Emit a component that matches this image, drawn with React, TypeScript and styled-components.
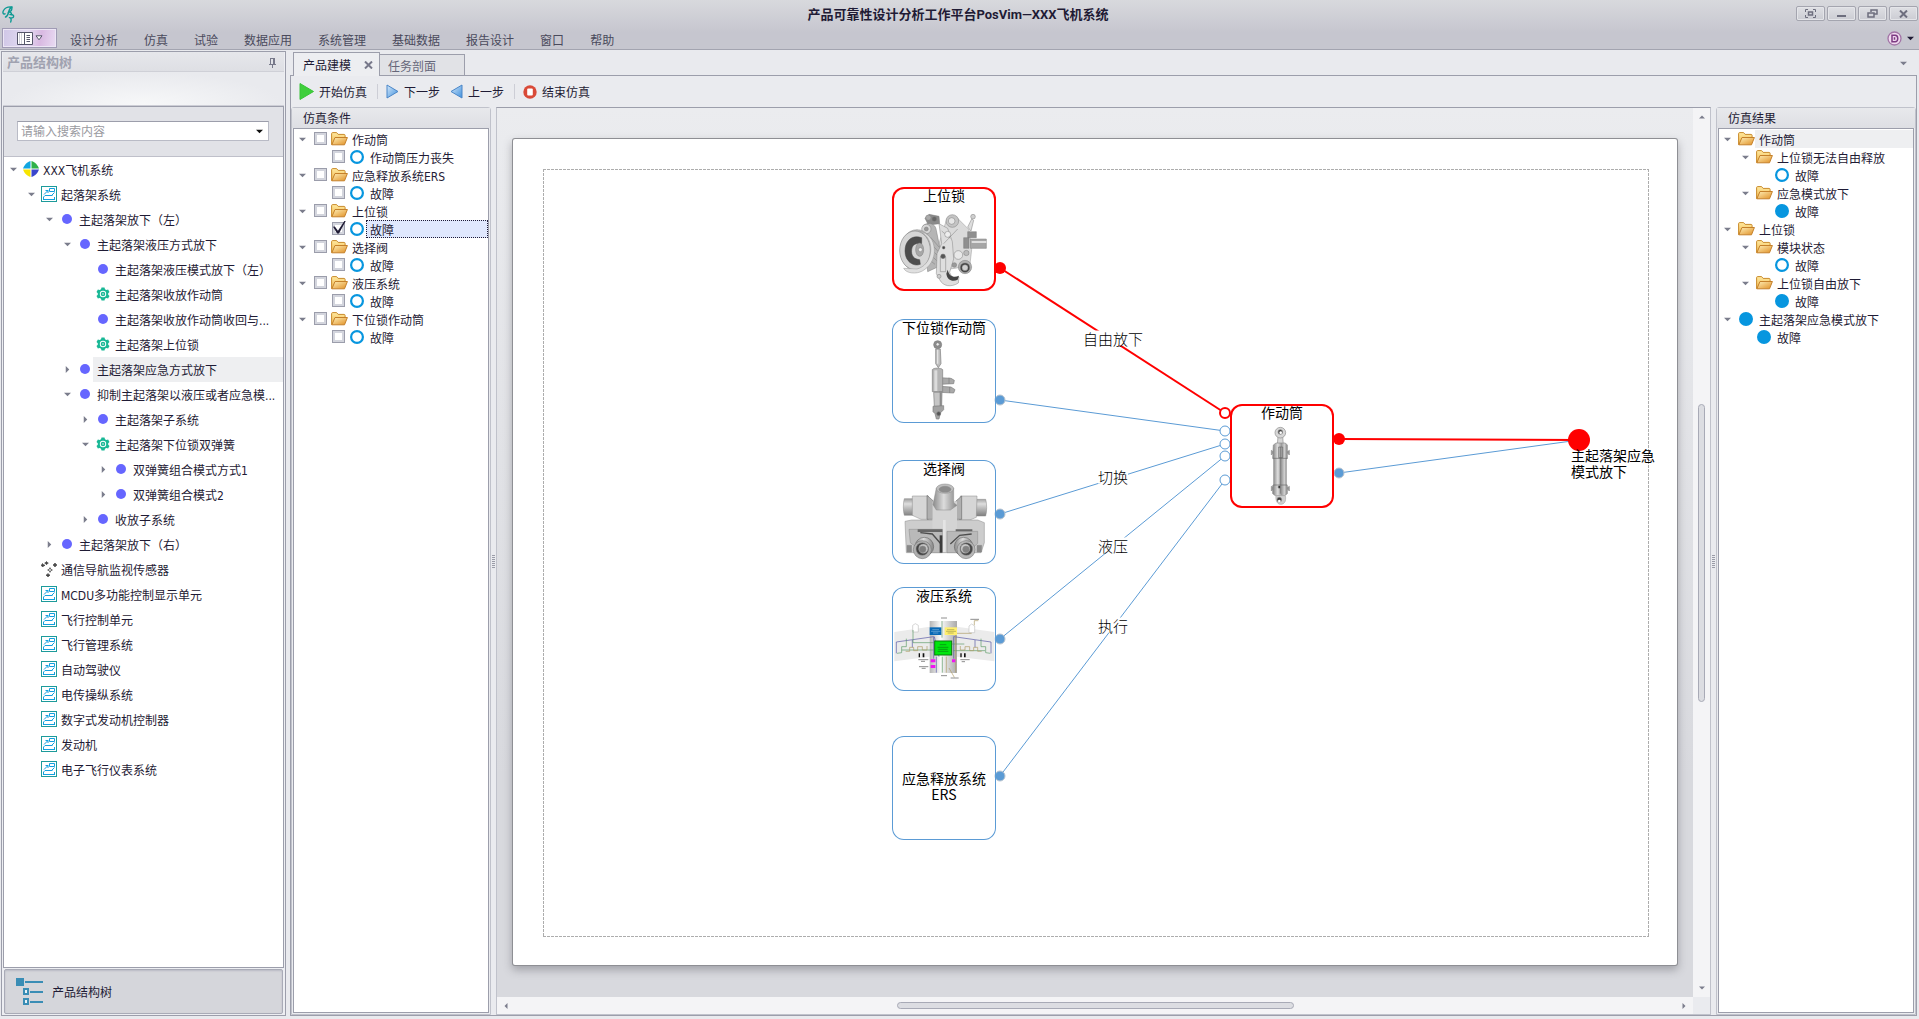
import React, { useState } from "react";
import styled, { createGlobalStyle, css } from "styled-components";

const UI_FONT = `"DejaVu Sans Condensed", "Noto Sans CJK SC", sans-serif`;
const NODE_FONT = `"Liberation Sans Narrow", "Noto Sans CJK SC", sans-serif`;
const LINE = "#9c9eab";
const INK = "#1f1b35";
const BLUE = "#5b9bd5";
const RED = "#ff0000";

const GlobalStyle = createGlobalStyle`
  *, *::before, *::after { box-sizing: border-box; }
  html, body, #root { height: 100%; margin: 0; }
  body { font-family: ${UI_FONT}; font-size: 12px; color: ${INK}; background: #e9eaee; overflow: hidden; }
  button, input { font: inherit; color: inherit; margin: 0; padding: 0; border: 0; background: none; }
  ul { list-style: none; margin: 0; padding: 0; }
  h1, h2 { margin: 0; font: inherit; }
  svg { display: block; flex: none; }
`;

/* ---------- frame ---------- */

const Shell = styled.div`
  display: flex;
  flex-direction: column;
  height: 100vh;
  min-width: 1100px;
`;

const Header = styled.header`
  display: flex;
  flex-direction: column;
  height: 50px;
  flex: none;
  background: linear-gradient(#d8d9dd, #c6c6cf 66%);
  border-bottom: 1px solid #a3a4b0;
`;

const TitleRow = styled.div`
  display: grid;
  grid-template-columns: 1fr auto 1fr;
  align-items: center;
  height: 27px;
  padding: 0 1px 0 2px;
`;

const AppTitle = styled.h1`
  font-family: Roboto, "Noto Sans CJK SC", sans-serif;
  font-size: 13px;
  line-height: 20px;
  font-weight: 700;
  padding: 2px 4px 0 0;
`;

const WindowButtons = styled.div`
  display: flex;
  justify-content: flex-end;
  gap: 2px;
`;

const WindowButton = styled.button`
  display: flex;
  align-items: center;
  justify-content: center;
  width: 29px;
  height: 15px;
  border: 1px solid #a4a5af;
  border-radius: 2px;
  background: linear-gradient(#dfe0e4, #cbccd3);
  box-shadow: inset 0 0 0 1px #e4e5e9;
`;

const MenuRow = styled.nav`
  display: flex;
  align-items: center;
  height: 22px;
  padding: 0 5px 0 2px;
`;

const AppMenuButton = styled.button`
  display: flex;
  align-items: center;
  justify-content: center;
  gap: 2px;
  width: 55px;
  height: 20px;
  margin-right: 13px;
  border: 1px solid #a09bb5;
  background: linear-gradient(100deg, #cfc6e6, #e3dcf2 45%, #d9b9e2 70%, #e9dcf3);
  box-shadow: inset 0 0 0 1px #ece6f5;
`;

const MenuItem = styled.button`
  height: 22px;
  margin-right: 26px;
  padding-top: 3px;
  color: #4a4a5c;
`;

const Spacer = styled.span`
  flex: 1;
`;

const SkinButton = styled.button`
  display: flex;
  align-items: center;
  gap: 5px;
`;

const Main = styled.main`
  display: flex;
  flex: 1;
  min-height: 0;
  gap: 4px;
  padding: 1px 2px 3px 1px;
`;

/* ---------- left dock ---------- */

const Dock = styled.aside`
  display: flex;
  flex-direction: column;
  flex: none;
  width: 285px;
  padding: 0 1px 1px;
  border: 1px solid ${LINE};
  background: #edeef2;
`;

const DockTitle = styled.div`
  display: flex;
  align-items: center;
  justify-content: space-between;
  height: 20px;
  padding: 2px 7px 0 4px;
  border-bottom: 1px solid #cfd0d7;
  background: linear-gradient(#e6e7eb, #dedfe4);
  color: #a0a2b0;
  h2 { font-size: 13px; line-height: 18px; font-weight: 700; }
`;

const DockBand = styled.div`
  height: 34px;
  border-bottom: 1px solid #cdced6;
  background: radial-gradient(ellipse at 50% 100%, #f7f8f9, #e9eaee 70%);
`;

const DockBox = styled.div`
  display: flex;
  flex-direction: column;
  flex: 1;
  min-height: 0;
  border: 1px solid ${LINE};
  background: #fff;
`;

const SearchArea = styled.div`
  height: 50px;
  flex: none;
  padding: 14px 14px 0 13px;
  background: #e1e2e7;
  border-bottom: 1px solid #bfc0ca;
`;

const SearchBox = styled.label`
  display: flex;
  align-items: center;
  height: 20px;
  padding: 0 5px 0 3px;
  border: 1px solid #b9bbc6;
  border-top-color: ${LINE};
  background: #fff;
  input {
    flex: 1;
    min-width: 0;
    padding-top: 2px;
    outline: 0;
    &::placeholder { color: #9a9a9f; opacity: 1; }
  }
`;

const Tree = styled.ul`
  flex: 1;
  min-height: 0;
  overflow: hidden;
`;

const DockNav = styled.button`
  display: flex;
  align-items: center;
  gap: 8px;
  flex: none;
  height: 45px;
  margin: 1px 1px 0;
  padding: 0 11px;
  border: 1px solid #a9abb7;
  border-radius: 2px;
  background: #d5d6db;
  box-shadow: inset 0 1px 2px #b9bac4;
`;

/* ---------- tree rows ---------- */

const Toggle = styled.button`
  display: flex;
  align-items: center;
  justify-content: center;
  width: 12px;
  height: 12px;
  margin-right: 5px;
`;

const IconSlot = styled.span`
  display: flex;
  justify-content: center;
  flex: none;
  width: 17px;
  padding-bottom: 1px;
`;

const Row = styled.li<{ $depth: number; $tall?: boolean }>`
  display: flex;
  align-items: center;
  height: ${(p) => (p.$tall ? 25 : 18)}px;
  padding-left: ${(p) => (p.$tall ? 3 : 2) + p.$depth * 18}px;
  ${(p) =>
    p.$tall &&
    css`
      ${Toggle} { margin-right: 4px; }
      ${IconSlot} { width: 16px; }
    `}
`;

const RowLabel = styled.span<{ $state?: "hover" | "selected" }>`
  flex: 1;
  min-width: 0;
  align-self: stretch;
  display: flex;
  align-items: center;
  padding-left: 4px;
  white-space: nowrap;
  ${(p) => p.$state === "hover" && css`background: #eeeff1;`}
  ${(p) => p.$state === "selected" && css`background: #e0e8fd; outline: 1px dotted ${INK}; outline-offset: -1px;`}
`;

const Check = styled.input`
  appearance: none;
  flex: none;
  width: 13px;
  height: 13px;
  margin: 0 4px 2px 1px;
  border: 1px solid #9b9dab;
  background: linear-gradient(#fff, #fff) 2px 2px / 7px 7px no-repeat, #d3d5dd;
  &:checked::after {
    content: "";
    display: block;
    width: 13px;
    height: 13px;
    margin-top: -2px;
    background: ${INK};
    clip-path: polygon(0 48%, 14% 46%, 38% 78%, 90% 0, 100% 0, 46% 100%, 32% 100%);
  }
`;

/* ---------- documents ---------- */

const Documents = styled.section`
  display: flex;
  flex-direction: column;
  flex: 1;
  min-width: 0;
`;

const TabStrip = styled.div`
  display: flex;
  align-items: flex-end;
  height: 24px;
  padding: 0 10px 0 3px;
`;

const Tab = styled.button<{ $active?: boolean }>`
  display: flex;
  align-items: center;
  justify-content: space-between;
  border: 1px solid ${LINE};
  border-bottom: 0;
  ${(p) =>
    p.$active
      ? css`
          width: 87px;
          height: 24px;
          margin-bottom: -1px;
          padding: 0 6px 0 9px;
          background: #edeef1;
          position: relative;
        `
      : css`
          width: 85px;
          height: 21px;
          padding: 1px 9px 0 8px;
          border-left: 0;
          background: #e1e2e6;
          color: #66677a;
        `}
`;

const TabMenu = styled.button`
  height: 12px;
  margin-bottom: 6px;
`;

const Frame = styled.div`
  display: flex;
  flex-direction: column;
  flex: 1;
  min-height: 0;
  border: 1px solid ${LINE};
  background: #eaebef;
`;

const ToolBar = styled.div`
  display: flex;
  align-items: center;
  height: 31px;
  flex: none;
  padding-left: 8px;
`;

const Tool = styled.button`
  display: flex;
  align-items: center;
  gap: 5px;
  height: 24px;
  margin-right: 10px;
`;

const ToolDivider = styled.span`
  width: 1px;
  height: 15px;
  margin-right: 8px;
  background: #cdced6;
`;

const Work = styled.div`
  display: flex;
  flex: 1;
  min-height: 0;
`;

const SidePanel = styled.section`
  display: flex;
  flex-direction: column;
  flex: none;
  width: 200px;
  padding: 0 1px 1px;
  border: 1px solid #c0c2cb;
  border-radius: 3px 3px 0 0;
  h2 {
    height: 20px;
    margin: 0 -1px;
    padding: 2px 0 0 11px;
    line-height: 18px;
    background: linear-gradient(#e8e9ec, #dedfe4);
  }
`;

const SideList = styled.ul`
  flex: 1;
  min-height: 0;
  padding-top: 1px;
  border: 1px solid ${LINE};
  background: #fff;
  overflow: hidden;
`;

const Splitter = styled.div`
  display: flex;
  align-items: center;
  justify-content: center;
  width: 5px;
  &::before {
    content: "";
    width: 3px;
    height: 13px;
    background: repeating-linear-gradient(#9a9ca8 0 1px, transparent 1px 2px);
  }
`;

/* ---------- canvas ---------- */

const CanvasFrame = styled.section`
  display: grid;
  grid-template-columns: 1fr 17px;
  grid-template-rows: 1fr 17px;
  flex: 1;
  min-width: 0;
  border: 1px solid #c0c2cb;
  border-top-color: ${LINE};
`;

const Desk = styled.div`
  display: flex;
  padding: 31px 16px 32px;
  background: linear-gradient(#ebecef, #d8d9de 75%);
  overflow: hidden;
`;

const Page = styled.div`
  position: relative;
  flex: 1;
  padding: 30px 28px 28px 30px;
  border-radius: 2px;
  background: #fff;
  box-shadow: 0 0 0 1px #8e8f94, 0 4px 9px 1px rgba(60, 60, 70, 0.35);
`;

const PrintArea = styled.div`
  height: 100%;
  background:
    repeating-linear-gradient(90deg, #adadad 0 3px, transparent 3px 4px) top / 100% 1px no-repeat,
    repeating-linear-gradient(90deg, #adadad 0 3px, transparent 3px 4px) bottom / 100% 1px no-repeat,
    repeating-linear-gradient(#adadad 0 3px, transparent 3px 4px) left / 1px 100% no-repeat,
    repeating-linear-gradient(#adadad 0 3px, transparent 3px 4px) right / 1px 100% no-repeat;
`;

const Links = styled.svg`
  position: absolute;
  inset: 0;
  width: 100%;
  height: 100%;
`;

const Node = styled.div<{ $x: number; $y: number; $hot?: boolean; $center?: boolean }>`
  position: absolute;
  left: ${(p) => p.$x}px;
  top: ${(p) => p.$y}px;
  display: flex;
  flex-direction: column;
  justify-content: ${(p) => (p.$center ? "center" : "flex-start")};
  width: 104px;
  height: 104px;
  padding: ${(p) => (p.$center ? "0 8px 4px" : "0")};
  border-radius: 12px;
  box-shadow: inset 0 0 0 ${(p) => (p.$hot ? `2px ${RED}` : `1px ${BLUE}`)};
  font: 14px/16px ${NODE_FONT};
  color: #000;
  text-align: center;
  > svg { position: absolute; inset: 0; }
`;

const LinkLabel = styled.span<{ $x: number; $y: number }>`
  position: absolute;
  left: ${(p) => p.$x}px;
  top: ${(p) => p.$y}px;
  transform: translate(-50%, -50%);
  height: 15px;
  font: 300 15px/15px "Noto Sans CJK SC", sans-serif;
  color: #000;
  background: #fff;
  white-space: nowrap;
`;

const EndLabel = styled.span`
  position: absolute;
  left: 1058px;
  top: 308px;
  width: 84px;
  font: 14px/16px ${NODE_FONT};
  color: #000;
`;

const VScroll = styled.div`
  display: flex;
  flex-direction: column;
  align-items: center;
  justify-content: space-between;
  padding: 4px 0;
  background: #f4f4f6;
`;

const HScroll = styled.div`
  display: flex;
  align-items: center;
  justify-content: space-between;
  padding: 0 4px;
  background: #f4f4f6;
`;

const ScrollButton = styled.button`
  display: flex;
  align-items: center;
  justify-content: center;
  width: 10px;
  height: 10px;
`;

const TrackV = styled.div`
  flex: 1;
  width: 7px;
  display: flex;
  flex-direction: column;
  &::before { content: ""; flex: 282; }
  &::after { content: ""; flex: 281; }
`;

const TrackH = styled.div`
  flex: 1;
  height: 7px;
  display: flex;
  &::before { content: ""; flex: 387; }
  &::after { content: ""; flex: 386; }
`;

const Thumb = styled.div<{ $grow: number }>`
  flex: ${(p) => p.$grow};
  border: 1px solid #a8aab6;
  border-radius: 4px;
  background: #dcdde2;
`;

/* ---------- icons ---------- */

const Tri = ({ dir = "down", size = 7, color = "#7b7d8c" }: { dir?: "down" | "up" | "left" | "right"; size?: number; color?: string }) => {
  const d = { down: "M0 2h8L4 6z", up: "M0 6h8L4 2z", left: "M6 0v8L2 4z", right: "M2 0v8l4-4z" }[dir];
  return (
    <svg width={size} height={size} viewBox="0 0 8 8">
      <path d={d} fill={color} />
    </svg>
  );
};

const Logo = () => (
  <svg width="13" height="18" viewBox="0 0 13 18" fill="none" stroke="#0f9a94" strokeLinecap="round" strokeLinejoin="round">
    <path d="M3 8.800C1 9.500.4 7.500 1.500 5.500 3 3 6 1.500 10 2 8 3 7 5 6.500 7.500 6 9.500 5 11.500 3.500 12" strokeWidth="1.400" />
    <path d="M9.800 2.200C10.300 5 8.500 6.800 6.300 7.300c2-.6 3.400.4 3.200 2.200" strokeWidth="1.400" />
    <path d="M8 9.500c2-.3 4 .6 3.600 2.100-.3 1.300-2.300 1.600-4.200 1 1.800.4 2.200 2 1.300 4.400" strokeWidth="1.400" />
  </svg>
);

const Pin = () => (
  <svg width="9" height="10" viewBox="0 0 9 10" shapeRendering="crispEdges">
    <path d="M2 0h5v1H2zM2 1h1v5H2zM5 1h2v5H5zM1 6h7v1H1zM4 7h1v3H4z" fill="#77798a" />
  </svg>
);

const Compass = () => (
  <svg width="16" height="16" viewBox="0 0 17 17">
    <path d="M8 0v8H0C1 5 4 1 8 0z" fill="#12a6e0" />
    <path d="M9 0v8h8C16 5 13 1 9 0z" fill="#2fb14a" />
    <path d="M8 17V9H0c1 3 4 7 8 8z" fill="#f7e500" />
    <path d="M9 17V9h8c-1 3-4 7-8 8z" fill="#3a46cc" />
  </svg>
);

const SystemIcon = () => (
  <svg width="16" height="16" viewBox="0 0 16 16" fill="none">
    <rect x=".5" y=".5" width="15" height="15" stroke="#1d9b9b" fill="#fff" />
    <path d="M8.500 2.500h5v3h-5zM2.500 13.500V11L4 9.500h7.500M2 13.500h12M13.500 13V11" stroke="#12a0e0" />
    <path d="M3 8.500l4-4M4.500 4.500H7V7M13.500 6.500l-3 3" stroke="#12a0e0" />
  </svg>
);

const Gear = () => (
  <svg width="14" height="14" viewBox="0 0 14 14">
    <path
      d="M5.500.5h3l.5 1.800 1.300.7 1.800-.5 1.400 2.500-1.300 1.300v1.400l1.300 1.300-1.400 2.500-1.800-.5-1.300.7-.5 1.800h-3L5 11.700 3.700 11l-1.800.5L.5 9l1.300-1.300V6.300L.5 5l1.400-2.500 1.800.5L5 2.300z"
      fill="#19b896"
    />
    <circle cx="7" cy="7" r="3.200" fill="#fff" />
    <circle cx="7" cy="7" r="1.500" fill="#fff" stroke="#19b896" strokeWidth="1.500" />
  </svg>
);

const Sensor = () => (
  <svg width="16" height="16" viewBox="0 0 16 16" fill="#444">
    <path d="M9 6l1 2 2 1-2 1-1 2-1-2-2-1 2-1z" />
    <circle cx="9" cy="9" r=".9" fill="#fff" />
    <path d="M1.500 2.500l1 1.200 1.500.6-1.500.7-.8 1-.7-1-1-.7 1-.6zM5.500.5l.8 1 1 .6-1 .6-.8 1-.8-1-1-.6 1-.6zM14 2l.8 1.300 1.200.7-1.200.7L14 6l-.8-1.300L12 4l1.200-.7zM7 12.500l.8 1 1.200.7-1.200.7-.8 1-.8-1-1.200-.7 1.200-.7z" stroke="#444" strokeWidth=".7" />
  </svg>
);

const Dot = () => (
  <svg width="14" height="14" viewBox="0 0 14 14">
    <circle cx="7" cy="7" r="5" fill="#6666ff" />
  </svg>
);

const Disc = ({ hollow }: { hollow?: boolean }) => (
  <svg width="15" height="14" viewBox="0 0 15 14">
    <circle cx="7" cy="7" r="5.900" fill={hollow ? "#fff" : "#0796df"} stroke="#0796df" strokeWidth="2.200" />
  </svg>
);

const Folder = () => (
  <svg width="17" height="14" viewBox="0 0 17 14">
    <defs>
      <linearGradient id="folderBack" x1="0" y1="0" x2="0" y2="1">
        <stop offset="0" stopColor="#ffeaa0" />
        <stop offset="1" stopColor="#f0b64c" />
      </linearGradient>
      <linearGradient id="folderFront" x1="0" y1="0" x2="1" y2="1">
        <stop offset="0" stopColor="#fff0b8" />
        <stop offset="1" stopColor="#e08f24" />
      </linearGradient>
    </defs>
    <path d="M.6 12.500V1.600C.6 1 1 .6 1.600.6h4l1.500 1.800h6c.6 0 1 .4 1 1v3z" fill="url(#folderBack)" stroke="#c98a2b" />
    <path d="M.8 12.800L4 5.500h12.400L13.500 12.800z" fill="url(#folderFront)" stroke="#c5802a" strokeLinejoin="round" />
  </svg>
);

const NavIcon = () => (
  <svg width="28" height="28" viewBox="0 0 28 28" shapeRendering="crispEdges">
    <path d="M0 0h8v8H0zM9 3h18v2H9zM14 13h13v2H14zM14 23h13v2H14z" fill="#3a8db5" />
    <path d="M8 11h4v5H8zM8 21h4v5H8z" fill="#e9f3f8" stroke="#3a8db5" strokeWidth="2" />
  </svg>
);

const Play = () => (
  <svg width="15" height="17" viewBox="0 0 15 17">
    <path d="M1 .5l13.500 8L1 16.500z" fill="#3fcf3c" stroke="#39c337" />
  </svg>
);

const Step = ({ back }: { back?: boolean }) => (
  <svg width="13" height="15" viewBox="0 0 13 15">
    <defs>
      <linearGradient id="stepFill" x1="0" y1="0" x2="1" y2="1">
        <stop offset="0" stopColor="#d5e9fb" />
        <stop offset="1" stopColor="#3f8fdc" />
      </linearGradient>
    </defs>
    <path d={back ? "M12 1v13L1 7.500z" : "M1 1v13l11-6.500z"} fill="url(#stepFill)" stroke="#4a86c8" strokeLinejoin="round" />
  </svg>
);

const Stop = () => (
  <svg width="14" height="14" viewBox="0 0 14 14">
    <circle cx="7" cy="7" r="6.700" fill="#d94a38" />
    <rect x="4.200" y="3.500" width="5.600" height="7" rx="1" fill="#fff" />
  </svg>
);

/* ---------- equipment drawings ---------- */

const UplockArt = () => (
  <svg width="104" height="104" viewBox="95 80 312 312" stroke="#7c7c7c" strokeWidth="1.500" fill="#cfcfcf">
    <path d="M258 180l34-6 34 34 8 60-8 68-30-14-40 6-26-60z" fill="#dadada" stroke="#999" />
    <path d="M322 200l12-24 6 4-8 32z" fill="#ddd" />
    <circle cx="338" cy="169" r="7" />
    <circle cx="276" cy="182" r="19" fill="#c4c4c4" />
    <circle cx="274" cy="182" r="10" fill="#e6e6e6" />
    <path d="M194 174l12-12 30 6 2 22-34 4z" fill="#8a8a8a" />
    <circle cx="204" cy="172" r="8" fill="#aaa" />
    <circle cx="222" cy="176" r="7" fill="#666" />
    <path d="M188 196c14-12 38-8 40 14l12 60-8 50-30 14z" fill="#b5b5b5" />
    <path d="M210 230l26 30M208 246l26 28M208 262l26 26M206 278l24 24M204 296l20 16" />
    <circle cx="198" cy="206" r="14" fill="#d8d8d8" />
    <circle cx="198" cy="206" r="6" fill="#999" />
    <ellipse cx="170" cy="270" rx="50" ry="62" fill="#b9b9b9" stroke="#888" />
    <ellipse cx="164" cy="270" rx="46" ry="58" fill="#d6d6d6" stroke="#777" />
    <path d="M184 232c-28-10-50 8-50 40s26 48 46 40l-2-14c-18-2-26-12-24-30s16-20 30-18z" fill="#4d4d4d" stroke="#444" />
    <path d="M178 212c24 12 36 34 33 62s-19 46-41 52l-40-2c8 16 38 18 56 8 22-12 38-36 36-66s-18-46-44-54z" fill="#e0e0e0" stroke="#999" />
    <ellipse cx="178" cy="268" rx="12" ry="20" fill="#a8a8a8" />
    <circle cx="180" cy="268" r="6" fill="#ececec" />
    <path d="M330 236h48v28h-48z" fill="#a6a6a6" />
    <path d="M334 242h44v6h-44z" fill="#dedede" stroke="none" />
    <path d="M310 232h16v32h-16zM322 214h26v18h-26z" fill="#8f8f8f" />
    <path d="M236 190l26 14 14 40 4 52-12 40c4 14 16 20 28 14l-2 18c-22 14-46 10-56-10l-10-18 2-60 14-30z" fill="#dedede" stroke="#858585" />
    <path d="M262 328c4 18 16 26 34 18l-4 12c-16 8-32 0-34-18z" fill="#444" stroke="none" />
    <path d="M250 250l42-44M244 212l26 22M240 290h16v44h-16z" fill="none" />
    <circle cx="250" cy="262" r="4" fill="#444" />
    <circle cx="248" cy="288" r="7" fill="#555" />
    <circle cx="262" cy="222" r="9" fill="#eee" />
    <circle cx="294" cy="284" r="13" fill="#e8e8e8" />
    <circle cx="318" cy="278" r="8" fill="#bbb" />
    <circle cx="314" cy="320" r="20" fill="#b0b0b0" />
    <circle cx="314" cy="322" r="14" fill="#3f3f3f" />
    <circle cx="314" cy="322" r="9" fill="#d0d0d0" />
    <circle cx="282" cy="314" r="7" fill="#999" />
    <circle cx="236" cy="348" r="6" fill="#ccc" />
  </svg>
);

const LockActuatorArt = () => (
  <svg width="104" height="104" viewBox="95 478 312 312" stroke="#7d7d7d" strokeWidth="2" fill="#bdbdbd">
    <circle cx="232" cy="555" r="12" fill="#8d8d8d" />
    <circle cx="232" cy="554" r="5" fill="#eee" />
    <path d="M226 568h14l2 44-8 12-8-12z" />
    <path d="M230 570h4v42h-4z" fill="#e4e4e4" stroke="none" />
    <path d="M238 654l34 2 10 6-2 10-42 2zM238 680l34 2 12 8-4 10-42-2z" fill="#a9a9a9" />
    <path d="M266 654v18M268 682v18" />
    <path d="M216 630c2-6 28-6 31 0v66h-31z" fill="#b4b4b4" />
    <path d="M222 632h9v62h-9z" fill="#dcdcdc" stroke="none" />
    <path d="M220 698h25l-1 42h-22z" fill="#c6c6c6" />
    <path d="M238 698h6v42h-6z" fill="#8b8b8b" stroke="none" />
    <path d="M218 740l32-2v12l-10 10-4 18h-8l-4-16-6-6z" fill="#a2a2a2" />
    <circle cx="235" cy="762" r="6" fill="#555" />
  </svg>
);

const ValveArt = () => (
  <svg width="104" height="104" viewBox="95 60 312 312" stroke="#8a8a8a" strokeWidth="1.500" fill="#c4c4c4">
    <defs>
      <linearGradient id="pipe" x1="0" y1="0" x2="0" y2="1">
        <stop offset="0" stopColor="#9d9d9d" />
        <stop offset=".3" stopColor="#dedede" />
        <stop offset="1" stopColor="#7e7e7e" />
      </linearGradient>
      <linearGradient id="pipeH">
        <stop offset="0" stopColor="#8b8b8b" />
        <stop offset=".45" stopColor="#dcdcdc" />
        <stop offset="1" stopColor="#868686" />
      </linearGradient>
    </defs>
    <path d="M132 176h70v50h-70c-4-12-4-38 0-50zM310 178h66c4 12 4 38 0 50h-66z" fill="url(#pipe)" />
    <path d="M156 168h48v70h-22l-26-12zM300 168h50l-2 64-20 8h-30z" fill="#d6d6d6" />
    <path d="M200 166l18 16v56h-18zM304 168l-18 16v54h18z" fill="#b0b0b0" stroke="#555" />
    <path d="M134 244l20-4h198l20 8v60l-10 30H138z" fill="#cdcdcd" />
    <path d="M216 184h74v90h-74z" fill="#d4d4d4" stroke="none" />
    <path d="M228 144h52v44l10 8-20 14h-42l-10-16z" fill="url(#pipeH)" />
    <ellipse cx="254" cy="146" rx="26" ry="14" fill="#bebebe" />
    <ellipse cx="254" cy="148" rx="18" ry="9" fill="#8c8c8c" />
    <path d="M146 268h100v70h-56l-40-30zM260 274h92v36l-30 28h-62z" fill="#b9b9b9" />
    <path d="M172 268h74v8h-74zM286 268h50v6h-50z" fill="#666" stroke="none" />
    <path d="M180 278l36 4 26 30M334 282l-36 4-28 26" stroke="#4d4d4d" strokeWidth="4" fill="none" />
    <path d="M238 286h8v52h-8z" fill="#3c3c3c" stroke="none" />
    <path d="M248 240h8v96h-8z" fill="#e4e4e4" stroke="none" />
    <path d="M140 316h14v20h-14zM350 316h14v20h-14z" fill="#888" />
    <circle cx="192" cy="320" r="28" fill="url(#pipeH)" stroke="#555" />
    <circle cx="186" cy="329" r="27" fill="#b0b0b0" stroke="#666" />
    <circle cx="186" cy="327" r="19" fill="#454545" />
    <circle cx="189" cy="326" r="14" fill="#c6c6c6" />
    <circle cx="187" cy="328" r="10" fill="#7d7d7d" />
    <circle cx="310" cy="320" r="28" fill="url(#pipeH)" stroke="#555" />
    <circle cx="317" cy="329" r="27" fill="#b8b8b8" stroke="#666" />
    <circle cx="318" cy="327" r="19" fill="#454545" />
    <circle cx="315" cy="326" r="14" fill="#cacaca" />
    <circle cx="317" cy="328" r="10" fill="#828282" />
  </svg>
);

const HydraulicArt = () => (
  <svg width="104" height="104" viewBox="95 441 312 312" fill="none" strokeWidth="2">
    <defs>
      <linearGradient id="fuselage">
        <stop offset="0" stopColor="#b5b5b5" />
        <stop offset=".4" stopColor="#fbfbfb" />
        <stop offset="1" stopColor="#a9a9a9" />
      </linearGradient>
    </defs>
    <path d="M102 576l106-16v90l-106 14zM290 560l112 16v88l-112-14z" fill="#ebebeb" />
    <path d="M208 543h82v156h-82z" fill="url(#fuselage)" />
    <path d="M157 556l8-5 9 5v20h-17zM326 558l8-6 9 6v20h-17z" fill="#fff" stroke="#c2c2c2" />
    <path d="M108 640v-34l112-16v66M392 640v-34l-112-16v66M156 600v22M344 600v22M228 650v48M222 590l14 60" stroke="#5555a5" />
    <path d="M110 640l14-2v-18h14v-24M390 640l-14-2v-18h-14v-24M158 570v38h64M274 612h38M124 630h96M278 632h96M245 543v50M246 650v48" stroke="#5c9b66" />
    <path d="M136 634h12v-12h12v10h12v-12h14v10h14v-12M364 634h-12v-12h-12v10h-12v-12h-14v10h-14v-12M334 580h-60M342 556v-14h12M258 650v48M266 684l16 28M286 584v114" stroke="#ae9c63" />
    <rect x="208" y="562" width="35" height="23" fill="#0868b5" />
    <path d="M216 569h20M212 574h28M218 579h16" stroke="#7bb2dc" />
    <rect x="253" y="562" width="37" height="23" fill="#ffef6e" />
    <path d="M260 569h22M257 574h30M262 579h18" stroke="#a09a4a" />
    <rect x="223" y="603" width="51" height="42" fill="#00e60e" stroke="#087c0c" strokeWidth="3" />
    <path d="M238 614h20M232 622h32M234 628h28M232 634h32" stroke="#077f10" />
    <path d="M211 658h14v9h-14zM211 675h14v9h-14zM275 658h10v9h-10z" fill="#f016f0" />
    <path d="M175 640h4v12h-4zM187 640h5v12h-5zM300 640h4v12h-4zM311 640h5v12h-5z" fill="#111" />
    <path d="M174 659h30M182 664h12M176 680h28M184 685h12M300 659h28M304 665h10M271 714h24M242 534h18M242 707h18M330 538h26" stroke="#555" />
  </svg>
);

const CylinderArt = () => (
  <svg width="104" height="104" viewBox="120 71 312 312" stroke="#8c8c8c" strokeWidth="2" fill="#c9c9c9">
    <defs>
      <linearGradient id="barrel">
        <stop offset="0" stopColor="#7f7f7f" />
        <stop offset=".35" stopColor="#dedede" />
        <stop offset=".6" stopColor="#9a9a9a" />
        <stop offset=".8" stopColor="#d0d0d0" />
        <stop offset="1" stopColor="#888" />
      </linearGradient>
    </defs>
    <path d="M264 168h14l2 26h-18z" fill="#d7d7d7" />
    <circle cx="271" cy="157" r="16" fill="#d6d6d6" />
    <circle cx="271" cy="155" r="7" fill="#3d3d3d" />
    <circle cx="272" cy="157" r="4" fill="#fff" stroke="none" />
    <path d="M244 210l8 6-8 8zM298 210l-8 6 8 8zM244 318l8 6-8 8zM298 318l-8 6 8 8z" fill="#999" />
    <path d="M250 194l8-6h28l6 6v40l-3 4v74l3 4v24l-8 6h-28l-8-6v-24l3-4v-74l-3-4z" fill="url(#barrel)" />
    <path d="M250 234h42M250 314h42M271 200v140M266 200h12v32h-12z" stroke="#666" fill="none" />
    <path d="M258 346h28c4 20-6 26-14 26s-16-8-14-26z" fill="#cfcfcf" stroke="#aaa" />
    <circle cx="268" cy="358" r="7" fill="#3a3a3a" />
    <circle cx="268" cy="362" r="4" fill="#fff" stroke="none" />
    <circle cx="268" cy="320" r="4" fill="#333" />
  </svg>
);

/* ---------- data ---------- */

type IconKind = "compass" | "system" | "dot" | "gear" | "sensor" | "folder" | "ring" | "disc";

interface TreeItem {
  label: string;
  depth: number;
  icon: IconKind;
  open?: boolean;
  state?: "hover" | "selected";
  checked?: boolean;
}

const structure: TreeItem[] = [
  { label: "XXX飞机系统", depth: 0, icon: "compass", open: true },
  { label: "起落架系统", depth: 1, icon: "system", open: true },
  { label: "主起落架放下（左）", depth: 2, icon: "dot", open: true },
  { label: "主起落架液压方式放下", depth: 3, icon: "dot", open: true },
  { label: "主起落架液压模式放下（左）", depth: 4, icon: "dot" },
  { label: "主起落架收放作动筒", depth: 4, icon: "gear" },
  { label: "主起落架收放作动筒收回与...", depth: 4, icon: "dot" },
  { label: "主起落架上位锁", depth: 4, icon: "gear" },
  { label: "主起落架应急方式放下", depth: 3, icon: "dot", open: false, state: "hover" },
  { label: "抑制主起落架以液压或者应急模...", depth: 3, icon: "dot", open: true },
  { label: "主起落架子系统", depth: 4, icon: "dot", open: false },
  { label: "主起落架下位锁双弹簧", depth: 4, icon: "gear", open: true },
  { label: "双弹簧组合模式方式1", depth: 5, icon: "dot", open: false },
  { label: "双弹簧组合模式2", depth: 5, icon: "dot", open: false },
  { label: "收放子系统", depth: 4, icon: "dot", open: false },
  { label: "主起落架放下（右）", depth: 2, icon: "dot", open: false },
  { label: "通信导航监视传感器", depth: 1, icon: "sensor" },
  { label: "MCDU多功能控制显示单元", depth: 1, icon: "system" },
  { label: "飞行控制单元", depth: 1, icon: "system" },
  { label: "飞行管理系统", depth: 1, icon: "system" },
  { label: "自动驾驶仪", depth: 1, icon: "system" },
  { label: "电传操纵系统", depth: 1, icon: "system" },
  { label: "数字式发动机控制器", depth: 1, icon: "system" },
  { label: "发动机", depth: 1, icon: "system" },
  { label: "电子飞行仪表系统", depth: 1, icon: "system" },
];

const conditionGroups: [string, string, boolean][] = [
  ["作动筒", "作动筒压力丧失", false],
  ["应急释放系统ERS", "故障", false],
  ["上位锁", "故障", true],
  ["选择阀", "故障", false],
  ["液压系统", "故障", false],
  ["下位锁作动筒", "故障", false],
];

const conditions: TreeItem[] = conditionGroups.flatMap(([group, fault, on]) => [
  { label: group, depth: 0, icon: "folder" as const, open: true, checked: false },
  { label: fault, depth: 1, icon: "ring" as const, checked: on, state: on ? ("selected" as const) : undefined },
]);

const results: TreeItem[] = [
  { label: "作动筒", depth: 0, icon: "folder", open: true, state: "hover" },
  { label: "上位锁无法自由释放", depth: 1, icon: "folder", open: true },
  { label: "故障", depth: 2, icon: "ring" },
  { label: "应急模式放下", depth: 1, icon: "folder", open: true },
  { label: "故障", depth: 2, icon: "disc" },
  { label: "上位锁", depth: 0, icon: "folder", open: true },
  { label: "模块状态", depth: 1, icon: "folder", open: true },
  { label: "故障", depth: 2, icon: "ring" },
  { label: "上位锁自由放下", depth: 1, icon: "folder", open: true },
  { label: "故障", depth: 2, icon: "disc" },
  { label: "主起落架应急模式放下", depth: 0, icon: "disc", open: true },
  { label: "故障", depth: 1, icon: "disc" },
];

const menus = ["设计分析", "仿真", "试验", "数据应用", "系统管理", "基础数据", "报告设计", "窗口", "帮助"];

const iconFor = (kind: IconKind) => {
  switch (kind) {
    case "compass": return <Compass />;
    case "system": return <SystemIcon />;
    case "gear": return <Gear />;
    case "sensor": return <Sensor />;
    case "folder": return <Folder />;
    case "ring": return <Disc hollow />;
    case "disc": return <Disc />;
    default: return <Dot />;
  }
};

const TreeRow = ({ item, tall }: { item: TreeItem; tall?: boolean }) => {
  const [checked, setChecked] = useState(!!item.checked);
  return (
    <Row $depth={item.depth} $tall={tall}>
      <Toggle aria-label={item.label} disabled={item.open === undefined}>
        {item.open !== undefined && <Tri dir={item.open ? "down" : "right"} />}
      </Toggle>
      {item.checked !== undefined && (
        <Check type="checkbox" aria-label={item.label} checked={checked} onChange={(e) => setChecked(e.target.checked)} />
      )}
      <IconSlot>{iconFor(item.icon)}</IconSlot>
      <RowLabel $state={item.state}>{item.label}</RowLabel>
    </Row>
  );
};

/* ---------- diagram ---------- */

const links = [
  { from: [487, 129], to: [712, 274], hot: true },
  { from: [487, 261], to: [712, 292] },
  { from: [487, 375], to: [712, 305] },
  { from: [487, 500], to: [712, 317] },
  { from: [487, 637], to: [712, 341] },
  { from: [826, 334], to: [1066, 301] },
  { from: [826, 300], to: [1066, 301], hot: true },
];

const Diagram = () => (
  <>
    <Links>
      {links.map((l, i) => (
        <line key={i} x1={l.from[0]} y1={l.from[1]} x2={l.to[0]} y2={l.to[1]} stroke={l.hot ? RED : BLUE} strokeWidth={l.hot ? 2 : 1} />
      ))}
      {links.map((l, i) => (
        <circle key={i} cx={l.from[0]} cy={l.from[1]} r={l.hot ? 6 : 5} fill={l.hot ? RED : BLUE} stroke={l.hot ? "none" : "#b9c4cf"} />
      ))}
      {links.slice(0, 5).map((l, i) => (
        <circle key={i} cx={l.to[0]} cy={l.to[1]} r="5" fill="#fff" stroke={l.hot ? RED : BLUE} strokeWidth={l.hot ? 2 : 1} />
      ))}
      <circle cx="1066" cy="301" r="11" fill={RED} />
    </Links>
    <Node $x={379} $y={48} $hot><UplockArt />上位锁</Node>
    <Node $x={379} $y={180}><LockActuatorArt />下位锁作动筒</Node>
    <Node $x={379} $y={321}><ValveArt />选择阀</Node>
    <Node $x={379} $y={448}><HydraulicArt />液压系统</Node>
    <Node $x={379} $y={597} $center>应急释放系统ERS</Node>
    <Node $x={717} $y={265} $hot><CylinderArt />作动筒</Node>
    <LinkLabel $x={600} $y={199}>自由放下</LinkLabel>
    <LinkLabel $x={600} $y={337}>切换</LinkLabel>
    <LinkLabel $x={600} $y={406}>液压</LinkLabel>
    <LinkLabel $x={600} $y={486}>执行</LinkLabel>
    <EndLabel>主起落架应急模式放下</EndLabel>
  </>
);

export default function App() {
  return (
    <Shell>
      <GlobalStyle />
      <Header>
        <TitleRow>
          <Logo />
          <AppTitle>产品可靠性设计分析工作平台PosVim—XXX飞机系统</AppTitle>
          <WindowButtons>
            <WindowButton aria-label="全屏">
              <svg width="11" height="9" viewBox="0 0 11 9" fill="none" stroke="#6d6e7e">
                <path d="M.5 3V.5H3M8 .5h2.500V3M10.500 6v2.500H8M3 8.500H.5V6" />
                <rect x="3.500" y="3" width="4" height="3" strokeWidth="1.500" />
              </svg>
            </WindowButton>
            <WindowButton aria-label="最小化">
              <svg width="10" height="9" viewBox="0 0 10 9"><path d="M0 6h9v2H0z" fill="#6d6e7e" /></svg>
            </WindowButton>
            <WindowButton aria-label="还原">
              <svg width="11" height="9" viewBox="0 0 11 9" fill="none" stroke="#6d6e7e" strokeWidth="1.500">
                <path d="M4 3V1h6v4H7M1 4h6v4H1z" />
              </svg>
            </WindowButton>
            <WindowButton aria-label="关闭">
              <svg width="9" height="8" viewBox="0 0 9 8"><path d="M1 .5l7 7M8 .5l-7 7" stroke="#6d6e7e" strokeWidth="2" /></svg>
            </WindowButton>
          </WindowButtons>
        </TitleRow>
        <MenuRow>
          <AppMenuButton aria-label="应用菜单">
            <svg width="16" height="13" viewBox="0 0 16 13" fill="none" stroke="#55566a">
              <path d="M.5.5h15v12H.5z" fill="#fff" />
              <path d="M7.500 1v11M9.500 3.500H13M9.500 5.500H13M9.500 7.500H13M9.500 9.500H13" />
              <path d="M2.500 1v11M4.500 1v11" stroke="#d0d0d8" />
            </svg>
            <svg width="8" height="6" viewBox="0 0 8 6" fill="#fff" stroke="#55566a"><path d="M1 .8h6L4 4.800z" /></svg>
          </AppMenuButton>
          {menus.map((m) => <MenuItem key={m}>{m}</MenuItem>)}
          <Spacer />
          <SkinButton aria-label="皮肤">
            <svg width="15" height="15" viewBox="0 0 15 15" fill="none">
              <circle cx="7.500" cy="7.500" r="6.500" fill="#f0d9ef" stroke="#a274a6" strokeWidth="1.300" />
              <path d="M5 4.200h3.200c3.400 0 3.400 6.600 0 6.600H5zM7.500 6.200v2.600" stroke="#7c3a82" strokeWidth="1.500" />
            </svg>
            <Tri color={INK} />
          </SkinButton>
        </MenuRow>
      </Header>

      <Main>
        <Dock>
          <DockTitle><h2>产品结构树</h2><Pin /></DockTitle>
          <DockBand />
          <DockBox>
            <SearchArea>
              <SearchBox>
                <input type="text" placeholder="请输入搜索内容" aria-label="请输入搜索内容" />
                <Tri color="#111" />
              </SearchBox>
            </SearchArea>
            <Tree>{structure.map((item, i) => <TreeRow key={i} item={item} tall />)}</Tree>
          </DockBox>
          <DockNav><NavIcon />产品结构树</DockNav>
        </Dock>

        <Documents>
          <TabStrip role="tablist">
            <Tab role="tab" $active aria-selected>
              产品建模
              <svg width="9" height="8" viewBox="0 0 9 8"><path d="M1 .5l7 7M8 .5l-7 7" stroke="#77788a" strokeWidth="2" /></svg>
            </Tab>
            <Tab role="tab">任务剖面</Tab>
            <Spacer />
            <TabMenu aria-label="标签列表"><Tri /></TabMenu>
          </TabStrip>
          <Frame>
            <ToolBar>
              <Tool><Play />开始仿真</Tool>
              <ToolDivider />
              <Tool><Step />下一步</Tool>
              <Tool><Step back />上一步</Tool>
              <ToolDivider />
              <Tool><Stop />结束仿真</Tool>
            </ToolBar>
            <Work>
              <SidePanel>
                <h2>仿真条件</h2>
                <SideList>{conditions.map((item, i) => <TreeRow key={i} item={item} />)}</SideList>
              </SidePanel>
              <Splitter />
              <CanvasFrame>
                <Desk>
                  <Page>
                    <PrintArea />
                    <Diagram />
                  </Page>
                </Desk>
                <VScroll>
                  <ScrollButton aria-label="向上"><Tri dir="up" size={6} /></ScrollButton>
                  <TrackV><Thumb $grow={297} /></TrackV>
                  <ScrollButton aria-label="向下"><Tri size={6} /></ScrollButton>
                </VScroll>
                <HScroll>
                  <ScrollButton aria-label="向左"><Tri dir="left" size={6} /></ScrollButton>
                  <TrackH><Thumb $grow={396} /></TrackH>
                  <ScrollButton aria-label="向右"><Tri dir="right" size={6} /></ScrollButton>
                </HScroll>
              </CanvasFrame>
              <Splitter />
              <SidePanel>
                <h2>仿真结果</h2>
                <SideList>{results.map((item, i) => <TreeRow key={i} item={item} />)}</SideList>
              </SidePanel>
            </Work>
          </Frame>
        </Documents>
      </Main>
    </Shell>
  );
}
